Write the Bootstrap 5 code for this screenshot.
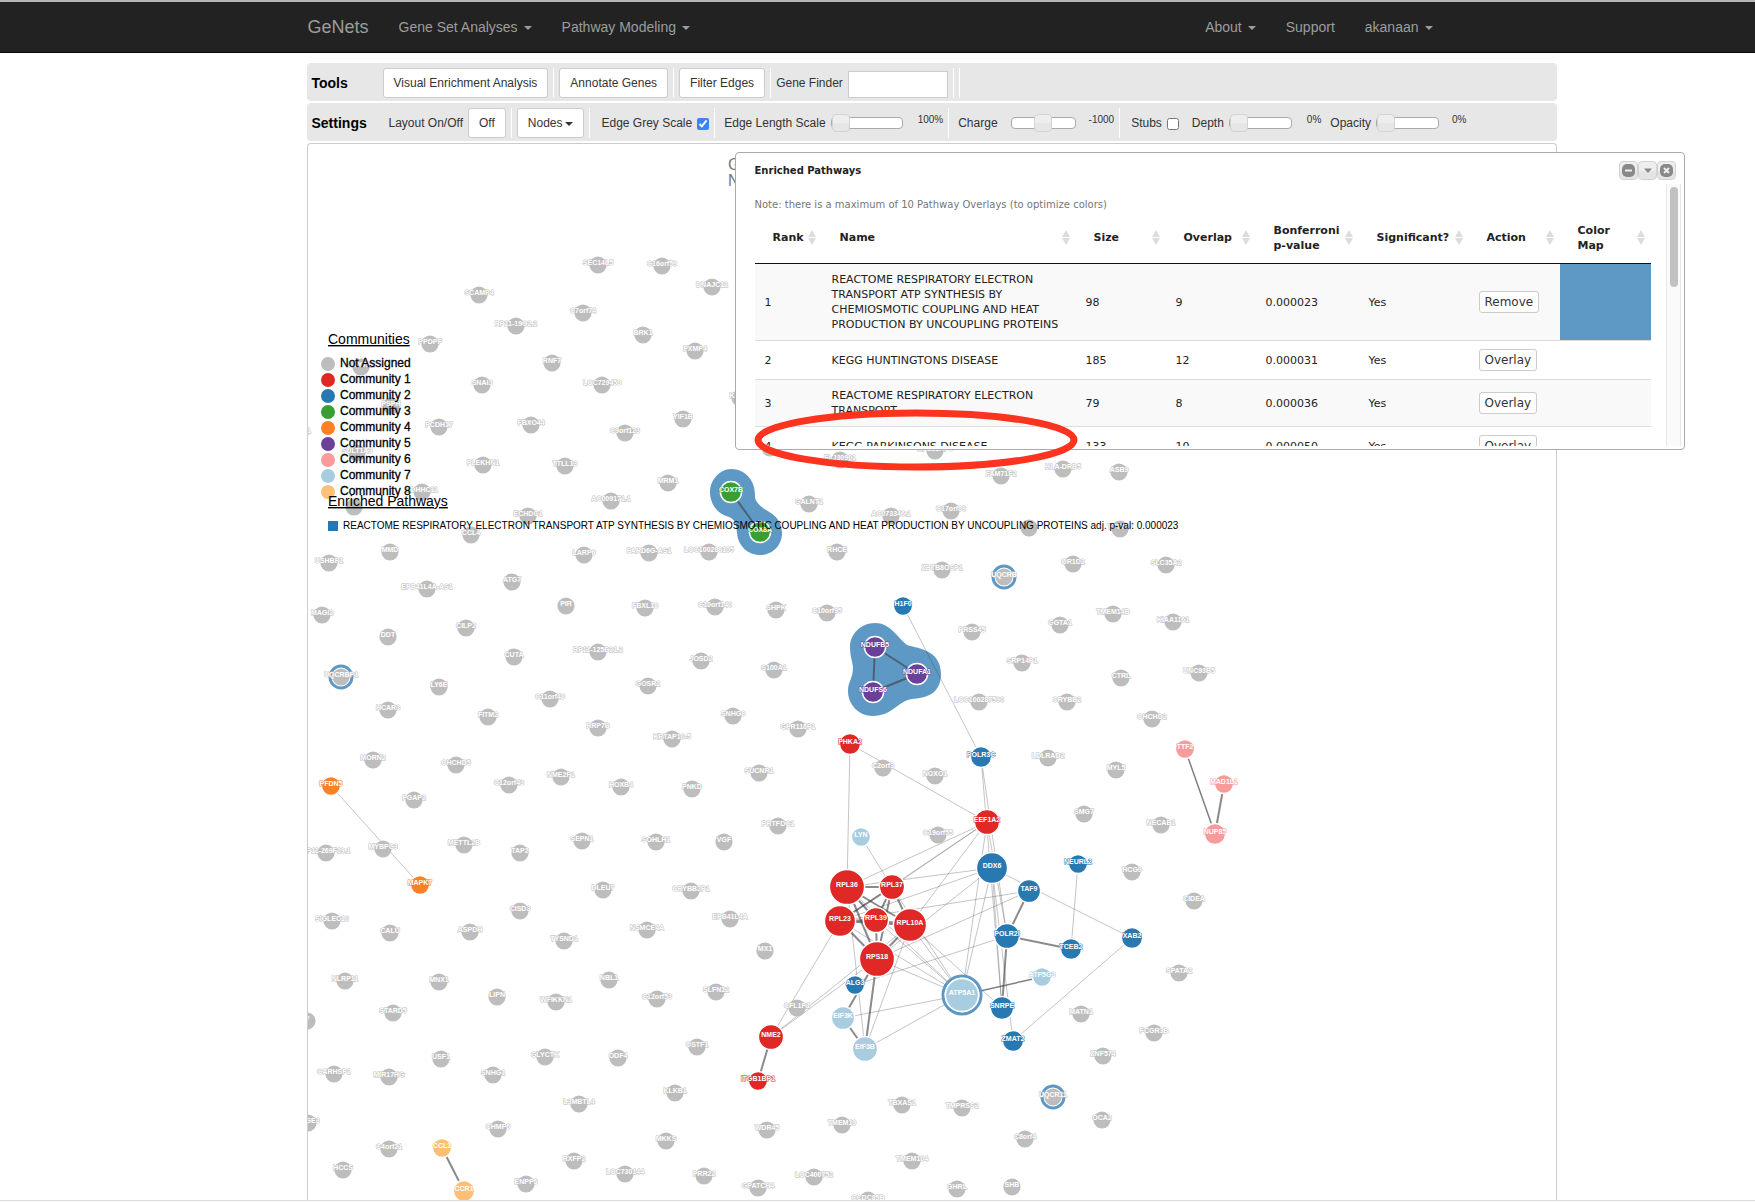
<!DOCTYPE html>
<html lang="en">
<head>
<meta charset="utf-8">
<meta name="viewport" content="width=device-width, initial-scale=1">
<title>GeNets</title>
<link rel="stylesheet" href="https://cdn.jsdelivr.net/npm/bootstrap@5.3.0/dist/css/bootstrap.min.css">
<style>
body{font-family:"Liberation Sans",Arial,sans-serif;font-size:12px;line-height:17px;color:#333;background:#fff;overflow-x:hidden}
.top-nav{background:#222;border-top:2px solid #b3b7b8;border-bottom:1px solid #080808;padding:0}
.nav-wrap{width:100%;max-width:1170px;margin:0 auto;padding:0 15px;min-height:50px}
.top-nav .navbar-brand{font-size:18px;line-height:20px;color:#9d9d9d;padding:0;margin:0 15px 0 0}
.top-nav .navbar-nav .nav-link{font-size:14px;line-height:20px;color:#9d9d9d;padding:15px}
.dropdown-toggle::after{border-top:4px solid;border-left:4px solid transparent;border-right:4px solid transparent;margin-left:6px;vertical-align:2px}
.workspace{max-width:1250px;margin:10px 0 0 max(15px,calc(50% - 571px))}
.toolbar{background:#e7e7e7;border-radius:4px;min-height:38px;padding:5px 0 3px 5px;gap:0 5px;margin-bottom:2px}
.toolbar h2{font-size:14px;line-height:20px;font-weight:700;color:#000;margin:0;width:66px}
.toolbar .btn{font-size:12px;line-height:18px;padding:5px 10px;border:1px solid #ccc;border-radius:3px;background:#fff;color:#333}
.toolbar .dropdown-toggle::after{margin-left:3px;vertical-align:1px}
.divider{width:1px;height:30px;background:#fff}
.lead-gap{margin-left:6px}
.finder{width:100px;height:27px;border:1px solid #ccc;background:#fff;align-self:flex-end}
.toolbar input[type=checkbox]{width:12px;height:12px;margin:2px 0 0;accent-color:#3b82f6}
.toolbar output{font-size:10px;line-height:14px;align-self:flex-start;padding-top:5px}
.out-gap{margin-left:10px}
.slide{appearance:none;-webkit-appearance:none;height:18px;background:transparent;margin:0}
.slide::-webkit-slider-runnable-track{height:12px;border:1px solid #aaa;border-radius:4px;background:#fff}
.slide::-webkit-slider-thumb{-webkit-appearance:none;width:18px;height:18px;margin-top:-4px;border:1px solid #d3d3d3;border-radius:4px;background:linear-gradient(#eee 50%,#e6e6e6 50%)}
.slide-lg{width:72px}.slide-md{width:65px}.slide-sm{width:63px}
.network-box{border:1px solid #ccc;border-bottom:0;border-radius:4px 4px 0 0;overflow:hidden}
.network-box svg{display:block;width:100%;height:1056px;font-family:"Liberation Sans",Arial,sans-serif}
.node-label{font-size:7px;font-weight:700;fill:#fff;text-anchor:middle;paint-order:stroke;stroke-width:1px}
.key-title{font-size:14px;text-decoration:underline}
.key-item{font-size:12px;stroke:#000;stroke-width:.3px}
.key-path{font-size:10px}
.heading-back{font-size:16px;fill:#777}
.page-end{height:2px;border-top:1px solid #ddd;background:#f7f7f7}
.dialog-box{position:absolute;left:428px;top:89px;width:950px;border:1px solid #aaa;border-radius:4px;background:#fff;font-family:"DejaVu Sans",Verdana,sans-serif;font-size:11px;line-height:15px;color:#222;padding-bottom:3px}
.dialog-head{height:31px;padding:8px 8px 0 19px}
.dialog-head h3{font-size:10px;line-height:20px;font-weight:700;margin:0}
.win-btn{width:19px;height:19px;padding:0;border:1px solid #d3d3d3;border-radius:4px;background:linear-gradient(#eee 50%,#e4e4e4 50%);line-height:0}
.dialog-body{height:262px;overflow:hidden;padding-left:19px}
.dialog-body p{font-size:10px;color:#777;margin:13px 0 2px}
.path-table{table-layout:fixed;width:896px;border-collapse:separate;border-spacing:0}
.path-table th{height:50px;padding:0 6px 2px 18px;border-bottom:1px solid #111;font-weight:700;vertical-align:middle}
.path-table td{padding:8px 8px 8px 10px;border-bottom:1px solid #ddd;vertical-align:middle}
.path-table tbody tr:nth-child(odd) td{background:#f9f9f9}
.path-table tbody td.swatch{background:#5e99c6!important}
.path-table .btn{display:block;font-family:inherit;font-size:12px;line-height:18px;padding:1px 5px;border:1px solid #ccc;border-radius:3px;background:#fff;color:#333}
.rail{width:15px;margin:0 3px 0 15px;border:1px solid #e8e8e8;border-width:0 1px;background:#fafafa;padding:3px 3px 0}
.rail-thumb{width:8px;height:100px;border-radius:4px;background:#c1c1c1}
.circled{position:absolute;left:447px;top:346px;pointer-events:none}
</style>
</head>
<body>
<nav class="navbar navbar-expand top-nav">
  <div class="nav-wrap d-flex align-items-center">
    <a class="navbar-brand" href="#">GeNets</a>
    <ul class="navbar-nav me-auto">
      <li class="nav-item"><a class="nav-link dropdown-toggle" href="#">Gene Set Analyses</a></li>
      <li class="nav-item"><a class="nav-link dropdown-toggle" href="#">Pathway Modeling</a></li>
    </ul>
    <ul class="navbar-nav">
      <li class="nav-item"><a class="nav-link dropdown-toggle" href="#">About</a></li>
      <li class="nav-item"><a class="nav-link" href="#">Support</a></li>
      <li class="nav-item"><a class="nav-link dropdown-toggle" href="#">akanaan</a></li>
    </ul>
  </div>
</nav>

<main class="workspace position-relative">
  <section class="toolbar d-flex align-items-center">
    <h2>Tools</h2>
    <button class="btn" type="button">Visual Enrichment Analysis</button><span class="divider"></span>
    <button class="btn" type="button">Annotate Genes</button><span class="divider"></span>
    <button class="btn" type="button">Filter Edges</button><span class="divider"></span>
    <label for="finder">Gene Finder</label><input class="finder" id="finder" type="text">
    <span class="divider"></span><span class="divider"></span>
  </section>
  <section class="toolbar d-flex align-items-center">
    <h2>Settings</h2>
    <label class="lead-gap" for="layout">Layout On/Off</label><button class="btn" id="layout" type="button">Off</button><span class="divider"></span>
    <button class="btn dropdown-toggle" type="button">Nodes</button><span class="divider"></span>
    <label class="lead-gap" for="grey">Edge Grey Scale</label><input id="grey" type="checkbox" checked><span class="divider"></span>
    <label class="ms-1" for="len">Edge Length Scale</label><input class="slide slide-lg" id="len" type="range" value="0"><output class="out-gap" for="len">100%</output><span class="divider"></span>
    <label class="ms-1" for="charge">Charge</label><input class="slide slide-md ms-2" id="charge" type="range" value="49"><output class="ms-2" for="charge">-1000</output><span class="divider"></span>
    <label class="lead-gap" for="stubs">Stubs</label><input id="stubs" type="checkbox">
    <label class="ms-2" for="depth">Depth</label><input class="slide slide-sm" id="depth" type="range" value="0"><output class="out-gap" for="depth">0%</output>
    <label class="ms-1" for="opac">Opacity</label><input class="slide slide-sm" id="opac" type="range" value="0"><output class="ms-2" for="opac">0%</output>
  </section>

  <div class="network-box">
    <svg role="img" aria-label="Gene network">
      <g id="scene" transform="translate(-308,-144)">
        <text class="heading-back" x="728" y="170">G</text>
        <text class="heading-back" x="728" y="186">N</text>
        <g fill="#5e99c6">
          <path d="M731,469C745,469 755,480 755,495C755,500 756,502 763,508C768,512 782,516 782,533C782,546 772,555 760,555C748,555 738,546 737,533C736,522 735,520 729,517C716,514 710,502 710,492C710,480 720,469 731,469Z"/>
          <path d="M875,623C890,623 897,637 907,645C914,648 941,648 941,674C941,699 917,698 912,699C898,701 892,716 873,716C858,716 848,704 848,691C848,681 853,679 853,667C852,660 850,655 850,647C850,634 861,623 875,623Z"/>
        </g>
        <g id="edges"></g>
        <g id="nodes"></g>
        <g id="legend"></g>
      </g>
    </svg>
  </div>

  <section class="dialog-box" role="dialog" aria-labelledby="dlg-title">
    <div class="dialog-head d-flex align-items-start">
      <h3 class="me-auto" id="dlg-title">Enriched Pathways</h3>
      <button class="win-btn" type="button" aria-label="Minimize"><svg width="13" height="13"><rect x="0" y="0" width="13" height="13" rx="5" fill="#888"/><path d="M3 6.5h7" stroke="#eee" stroke-width="2"/></svg></button>
      <button class="win-btn" type="button" aria-label="Collapse"><svg width="13" height="13"><path d="M3 4.500h8l-4 4.500z" fill="#888"/></svg></button>
      <button class="win-btn" type="button" aria-label="Close"><svg width="13" height="13"><rect x="0" y="0" width="13" height="13" rx="5" fill="#888"/><path d="M4 4l5 5M9 4l-5 5" stroke="#eee" stroke-width="2"/></svg></button>
    </div>
    <div class="d-flex">
      <div class="dialog-body flex-grow-1">
        <p>Note: there is a maximum of 10 Pathway Overlays (to optimize colors)</p>
        <table class="path-table">
          <colgroup><col style="width:67px"><col style="width:254px"><col style="width:90px"><col style="width:90px"><col style="width:103px"><col style="width:110px"><col style="width:91px"><col style="width:91px"></colgroup>
          <thead><tr id="heads"></tr></thead>
          <tbody>
            <tr><td>1</td><td>REACTOME RESPIRATORY ELECTRON TRANSPORT ATP SYNTHESIS BY CHEMIOSMOTIC COUPLING AND HEAT PRODUCTION BY UNCOUPLING PROTEINS</td><td>98</td><td>9</td><td>0.000023</td><td>Yes</td><td><button class="btn" type="button">Remove</button></td><td class="swatch"></td></tr>
            <tr><td>2</td><td>KEGG HUNTINGTONS DISEASE</td><td>185</td><td>12</td><td>0.000031</td><td>Yes</td><td><button class="btn" type="button">Overlay</button></td><td></td></tr>
            <tr><td>3</td><td>REACTOME RESPIRATORY ELECTRON TRANSPORT</td><td>79</td><td>8</td><td>0.000036</td><td>Yes</td><td><button class="btn" type="button">Overlay</button></td><td></td></tr>
            <tr><td>4</td><td>KEGG PARKINSONS DISEASE</td><td>133</td><td>10</td><td>0.000050</td><td>Yes</td><td><button class="btn" type="button">Overlay</button></td><td></td></tr>
          </tbody>
        </table>
      </div>
      <div class="rail"><div class="rail-thumb"></div></div>
    </div>
  </section>
  <svg class="circled" width="326" height="62" aria-hidden="true"><ellipse cx="162" cy="31" rx="158" ry="27" fill="none" stroke="#fc341f" stroke-width="7"/></svg>
</main>
<div class="page-end"></div>

<script src="https://cdn.jsdelivr.net/npm/bootstrap@5.3.0/dist/js/bootstrap.bundle.min.js"></script>
<script>
const C={g:'#bdbdbd',r:'#e02826',b:'#2878b1',n:'#389f33',o:'#fd8124',p:'#6a4098',k:'#f89b9a',l:'#a8cde1',y:'#fcbf75'};
const plain=`SEC14L5 598 265|C16orf59 662 266|DNAJC12 712 287|SCAMP4 479 295|C7orf74 583 313|RP11-19O2.2 516 326|BRK1 643 335|PPDPF 430 344|PXMP4 695 351|RNF7 552 363|COX7A2 361 367|SNAI3 482 385|LOC729458 602 385|KLF11 740 398|PSPH 391 406|PCDH17 439 427|FBXO44 531 425|YIF1B 683 419|C9orf123 625 433|RPL41 300 433|SULT1A3 357 453|PLEKHN1 483 465|TTLL13 565 466|MRM1 668 483|ZDHHC11 422 492|AC009171.1 611 501|_ 354 507|ECHDC1 528 516|CCL4 471 535|MMD 390 552|LARP6 584 555|PARD6G-AS1 649 553|LOC100288105 709 552|USHBP1 329 563|EPB41L4A-AS1 427 589|ATG7 512 582|PIR 566 606|FBXL18 645 608|C10orf140 715 607|MAGI2 322 615|DDT 388 637|CILP2 466 628|CUTA 514 657|RP11-125B21.2 598 652|JOSD2 701 661|UQCRBP1 341 677|LY6E 439 687|GOSR2 648 686|C11orf48 550 699|HCAR3 388 710|FITM2 488 717|RRP7B 598 728|KRTAP10-5 672 739|SNHG8 733 716|MORN2 373 760|CHCHD5 456 765|NME2P1 561 777|C12orf43 509 785|HOXB4 621 787|PNKD 692 789|PGAP2 414 800|MYBPC3 383 849|METTL2B 464 845|TAP2 520 853|SEPN1 582 841|SOHLH1 656 842|VGF 724 842|RP11-269F19.1 326 853|DLEU7 603 890|CRYBB2P1 691 891|CISD3 520 911|SIGLEC10 332 921|EPB41L4A 730 919|CALU 390 933|ASPDH 470 932|NSMCE4A 647 930|TYSND1 564 941|NLRP11 345 981|MNX1 439 982|NBL1 609 980|LIPN 497 997|WFIKKN1 556 1002|C12orf53 657 999|SLFN12 716 992|STARD5 393 1013|V 307 1021|USF1 441 1059|GLYCTK 545 1057|ODF4 618 1058|OSTF1 697 1047|CARHSP1 334 1074|MIR17HG 389 1077|SNHG1 493 1075|KLKB1 675 1093|L3MBTL4 579 1104|PAGE3 308 1123|CHMP6 498 1129|C4orf21 389 1149|MKKS 666 1141|RXFP2 574 1161|HCCS 343 1170|LOC730144 625 1174|PRR22 704 1176|ENPP6 526 1184|_ 770 448|FLJ30901 840 460|RPL13AP3 935 451|FAM71F2 1001 476|HLA-DRB5 1063 469|ASB9 1119 472|GALNT1 809 504|AC073346.1 891 516|C17orf89 951 511|_ 1029 528|TTTY15 1120 529|RHCE 837 552|ZBTB8OSP1 942 570|UQCRB 1004 577|OR1D2 1073 564|SLC35A2 1166 565|SHPK 776 610|C10orf95 827 613|GGTA1 1060 625|TMEM14B 1113 614|KIAA1161 1173 622|PRSS45 972 632|S100A1 774 670|SRP14P1 1022 663|CTRL 1121 678|UNC93B5 1199 673|LOC100287590 979 702|CRYBB2 1067 702|CHCHD2 1152 719|GPR116P1 798 729|LDLRAD2 1048 758|MYL5 1116 770|C2orf3 883 768|NOXO1 935 776|SUCNR1 759 773|PRTFDC1 778 826|C19orf55 938 835|MX1 765 951|CFL1P1 797 1008|MATN1 1081 1014|FCGR3B 1154 1033|ZNF574 1103 1056|UQCR11 1053 1097|TBXAS1 902 1105|TMPRSS2 962 1108|OCA2 1102 1120|WDR45 767 1130|TMEM19 842 1125|C8orf4 1025 1139|TMEM104 912 1161|GPATCH4 758 1188|LOC400752 814 1177|CCDC85B 868 1200|GHRL 957 1189|SHB 1012 1187|SMG7 1084 814|NECAB1 1161 825|HCG9 1132 872|CIDEA 1194 901|SPATA2 1179 973`;
const linked=`PFDN5 331 786 9 o|MAPK7 420 885 9 o|CCL3 442 1148 9 y|CCR1 464 1191 10 y|COX7B 731 492 10 n|COX8A 760 532 10 n|H1F0 903 606 9 b|NDUFB5 875 647 10 p|NDUFA1 917 674 10 p|NDUFS6 873 692 10 p|PHKA2 850 744 10 r|POLR3C 981 757 10 b|TTF2 1185 749 9 k|MAD1L1 1224 784 9 k|NUP85 1215 834 10 k|EEF1A2 987 822 12 r|LYN 861 837 9 l|RPL36 847 887 17 r|RPL37 892 887 12 r|DDX6 992 868 15 b|TAF9 1029 891 11 b|RPL23 840 921 15 r|RPL39 876 920 12 r|RPL10A 910 925 16 r|POLR2I 1007 936 12 b|RPS18 877 959 17 r|ALG3 855 985 9 b|NME2 771 1037 12 r|EIF3K 843 1018 11 l|EIF3B 865 1049 12 l|ATP5A1 962 995 16 l|ATP5G3 1042 977 9 l|SNRPE 1002 1008 11 b|ZMAT2 1013 1041 10 b|ITGB1BP1 758 1081 9 r|NEURL2 1078 864 9 b|XAB2 1132 938 10 b|TCEB2 1071 949 10 b`;
const strong='COX7B-COX8A NDUFB5-NDUFA1 NDUFB5-NDUFS6 NDUFA1-NDUFS6 CCL3-CCR1 NME2-ITGB1BP1 TAF9-POLR2I POLR2I-TCEB2 POLR2I-SNRPE RPS18-EIF3K EIF3K-EIF3B RPS18-EIF3B RPL36-RPL37 RPL36-RPL39 RPL36-RPL10A RPL36-RPS18 RPL37-RPL23 RPL37-RPL39 RPL37-RPS18 RPL37-RPL10A RPL23-RPL39 RPL23-RPS18 RPL39-RPS18 RPL39-RPL10A RPL10A-RPS18 RPL23-RPL10A MAD1L1-NUP85';
const medium='TTF2-NUP85 ATP5A1-ATP5G3';
const faint='PFDN5-MAPK7 H1F0-POLR3C PHKA2-RPL36 PHKA2-EEF1A2 LYN-RPL37 POLR3C-POLR2I POLR3C-SNRPE EEF1A2-RPL36 EEF1A2-RPL37 EEF1A2-RPL10A EEF1A2-RPL23 EEF1A2-ATP5A1 DDX6-RPL36 DDX6-RPL23 DDX6-RPS18 DDX6-ATP5A1 DDX6-SNRPE DDX6-ZMAT2 DDX6-XAB2 EEF1A2-POLR2I TAF9-RPS18 TAF9-RPL23 POLR2I-ALG3 XAB2-ZMAT2 NEURL2-TCEB2 ATP5A1-RPL36 ATP5A1-RPL37 ATP5A1-RPL39 ATP5A1-RPL10A ATP5A1-RPL23 ATP5A1-RPS18 ATP5A1-EIF3K ATP5A1-EIF3B SNRPE-RPL10A NME2-RPL23 NME2-RPL10A NME2-RPS18 EIF3B-RPL36 EIF3B-RPL10A';
const pos={};
const parse=s=>s.split('|').map(t=>{const [n,x,y,r=8,c='g']=t.split(' ');return {n,x:+x,y:+y,r:+r,c};});
const all=[...parse(plain),...parse(linked)];
all.forEach(d=>pos[d.n]=d);
const draw=(s,w,col)=>s.split(' ').map(e=>{const [a,b]=e.split('-').map(k=>pos[k]);return `<line x1="${a.x}" y1="${a.y}" x2="${b.x}" y2="${b.y}" stroke="${col}" stroke-width="${w}"/>`;}).join('');
document.getElementById('edges').innerHTML=draw(faint,1,'rgba(60,60,60,.3)')+draw(medium,1.5,'rgba(60,60,60,.65)')+draw(strong,2,'rgba(60,60,60,.6)');
const ringed=['UQCRBP1','UQCRB','UQCR11','ATP5A1'];
document.getElementById('nodes').innerHTML=all.map(d=>
  (ringed.includes(d.n)?`<circle cx="${d.x}" cy="${d.y}" r="${d.r+3}" fill="#fff" stroke="#5e99c6" stroke-width="3"/>`:'')+
  `<circle cx="${d.x}" cy="${d.y}" r="${d.r+.6}" fill="${C[d.c]}" stroke="#fff" stroke-width="${d.c==='g'?0:1.5}"/>`+
  (d.n==='_'?'':`<text class="node-label" x="${d.x}" y="${d.y}" stroke="${C[d.c]}">${d.n}</text>`)).join('');
document.getElementById('legend').innerHTML='<text class="key-title" x="328" y="344">Communities</text>'+
  [...'grbnopkly'].map((c,i)=>`<circle cx="328" cy="${364+16*i}" r="7" fill="${C[c]}"/><text class="key-item" x="340" y="${367+16*i}">${i?'Community '+i:'Not Assigned'}</text>`).join('')+
  '<text class="key-title" x="328" y="506">Enriched Pathways</text><rect x="328" y="521" width="10" height="10" fill="#2878b1"/>'+
  '<text class="key-path" x="343" y="529">REACTOME RESPIRATORY ELECTRON TRANSPORT ATP SYNTHESIS BY CHEMIOSMOTIC COUPLING AND HEAT PRODUCTION BY UNCOUPLING PROTEINS adj. p-val: 0.000023</text>';
document.getElementById('heads').innerHTML=['Rank','Name','Size','Overlap','Bonferroni p-value','Significant?','Action','Color Map'].map(h=>
  `<th scope="col"><div class="d-flex align-items-center justify-content-between"><span>${h.replace(' ','<br>')}</span><svg class="flex-shrink-0" width="8" height="15"><path d="M0 7l4-7 4 7zM0 8h8l-4 7z" fill="#dcdcdc"/></svg></div></th>`).join('');
</script>
</body>
</html>
